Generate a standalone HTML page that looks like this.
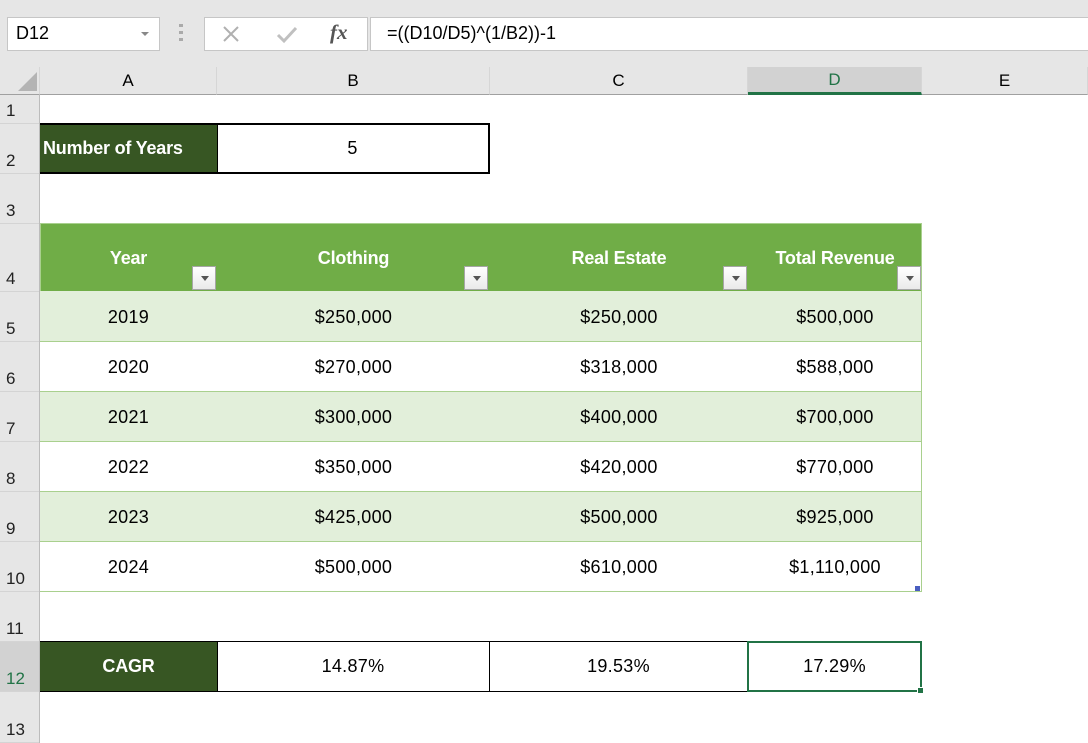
<!DOCTYPE html>
<html><head><meta charset="utf-8"><style>
*{margin:0;padding:0;box-sizing:border-box}
body{width:1088px;height:743px;background:#fff;position:relative;overflow:hidden;font-family:"Liberation Sans",sans-serif;color:#000}
.a{position:absolute}
.c{position:absolute;display:flex;align-items:center;justify-content:center;font-size:18px;letter-spacing:0.3px}
.h{color:#fff;font-weight:bold;font-size:18px;letter-spacing:-0.2px}
.rn{position:absolute;left:0;width:40px;font-size:17px;color:#222;padding-left:6px;background:#e6e6e6;border-bottom:1px solid #d4d4d4;display:flex;align-items:flex-end;padding-bottom:2px}
.ch{position:absolute;top:67px;height:28px;font-size:17px;display:flex;align-items:center;justify-content:center;border-right:1px solid #d6d6d6;border-bottom:1px solid #a0a0a0;background:#e6e6e6}
.dd{position:absolute;width:24px;height:24px;background:linear-gradient(#fff,#eaeaea);border:1px solid #a6a6a6}
.dd:after{content:"";position:absolute;left:8px;top:9px;border-left:4px solid transparent;border-right:4px solid transparent;border-top:5px solid #555}
</style></head><body>
<div class="a" style="left:0;top:0;width:1088px;height:67px;background:#e6e6e6"></div>
<div class="a" style="left:7px;top:17px;width:153px;height:34px;background:#fff;border:1px solid #c6c6c6;font-size:18px;padding:5px 0 0 8px">D12</div>
<div class="a" style="left:141px;top:32px;border-left:4px solid transparent;border-right:4px solid transparent;border-top:4px solid #888"></div>
<div class="a" style="left:179px;top:24px;width:4px;height:20px;background:repeating-linear-gradient(#aaa 0 3px,transparent 3px 7px)"></div>
<div class="a" style="left:204px;top:17px;width:164px;height:34px;background:#fff;border:1px solid #c6c6c6"></div>
<svg class="a" style="left:221px;top:24px" width="20" height="20"><path d="M3 3L17 17M17 3L3 17" stroke="#b0b0b0" stroke-width="2"/></svg>
<svg class="a" style="left:276px;top:25px" width="22" height="20"><path d="M2 10L8 16L20 3" stroke="#c0c0c0" stroke-width="3" fill="none"/></svg>
<div class="a" style="left:330px;top:20px;font-family:'Liberation Serif',serif;font-style:italic;font-weight:bold;font-size:21px;color:#555">fx</div>
<div class="a" style="left:370px;top:17px;width:720px;height:34px;background:#fff;border:1px solid #c6c6c6;font-size:18px;padding:5px 0 0 16px">=((D10/D5)^(1/B2))-1</div>
<div class="ch" style="left:0;width:40px"></div>
<svg class="a" style="left:18px;top:72px" width="19" height="19"><path d="M19 0L19 19L0 19Z" fill="#b4b4b4"/></svg>
<div class="ch" style="left:40px;width:177px">A</div>
<div class="ch" style="left:217px;width:273px">B</div>
<div class="ch" style="left:490px;width:258px">C</div>
<div class="ch" style="left:748px;width:174px;background:#d2d2d2;color:#217346;border-bottom:3px solid #217346">D</div>
<div class="ch" style="left:922px;width:166px">E</div>
<div class="a" style="left:39px;top:95px;width:1px;height:648px;background:#bcbcbc;z-index:2"></div>
<div class="rn" style="top:95px;height:29px">1</div>
<div class="rn" style="top:124px;height:50px">2</div>
<div class="rn" style="top:174px;height:50px">3</div>
<div class="rn" style="top:224px;height:68px">4</div>
<div class="rn" style="top:292px;height:50px">5</div>
<div class="rn" style="top:342px;height:50px">6</div>
<div class="rn" style="top:392px;height:50px">7</div>
<div class="rn" style="top:442px;height:50px">8</div>
<div class="rn" style="top:492px;height:50px">9</div>
<div class="rn" style="top:542px;height:50px">10</div>
<div class="rn" style="top:592px;height:50px">11</div>
<div class="rn" style="top:642px;height:50px;background:#d2d2d2;color:#217346">12</div>
<div class="rn" style="top:692px;height:51px">13</div>
<div class="c h" style="left:40px;top:123px;width:178px;height:51px;background:#375623;border:2px solid #000;border-right:1px solid #000;border-left:none;justify-content:flex-start;padding-left:3px;font-size:18px">Number of Years</div>
<div class="c" style="left:217px;top:123px;width:273px;height:51px;border:2px solid #000;border-left:none">5</div>
<div class="a" style="left:40px;top:223px;width:882px;height:69px;background:#70ad47;border:1px solid #a9d08e"></div>
<div class="c h" style="left:40px;top:238px;width:177px;height:40px">Year</div>
<div class="c h" style="left:217px;top:238px;width:273px;height:40px">Clothing</div>
<div class="c h" style="left:490px;top:238px;width:258px;height:40px">Real Estate</div>
<div class="c h" style="left:748px;top:238px;width:174px;height:40px">Total Revenue</div>
<div class="dd" style="left:192px;top:266px"></div>
<div class="dd" style="left:464px;top:266px"></div>
<div class="dd" style="left:723px;top:266px"></div>
<div class="dd" style="left:897px;top:266px"></div>
<div class="a" style="left:40px;top:291px;width:882px;height:301px;border-right:1px solid #a9d08e;background:
linear-gradient(#e2efda 0 50px,#a9d08e 50px 51px,#fff 51px 100px,#a9d08e 100px 101px,#e2efda 101px 150px,#a9d08e 150px 151px,#fff 151px 200px,#a9d08e 200px 201px,#e2efda 201px 250px,#a9d08e 250px 251px,#fff 251px 300px,#a9d08e 300px 301px)"></div>
<div class="a" style="left:915px;top:586px;width:5px;height:5px;background:#4a5ec0"></div>

<div class="c" style="left:40px;top:292px;width:177px;height:50px">2019</div>
<div class="c" style="left:217px;top:292px;width:273px;height:50px">$250,000</div>
<div class="c" style="left:490px;top:292px;width:258px;height:50px">$250,000</div>
<div class="c" style="left:748px;top:292px;width:174px;height:50px">$500,000</div>
<div class="c" style="left:40px;top:342px;width:177px;height:50px">2020</div>
<div class="c" style="left:217px;top:342px;width:273px;height:50px">$270,000</div>
<div class="c" style="left:490px;top:342px;width:258px;height:50px">$318,000</div>
<div class="c" style="left:748px;top:342px;width:174px;height:50px">$588,000</div>
<div class="c" style="left:40px;top:392px;width:177px;height:50px">2021</div>
<div class="c" style="left:217px;top:392px;width:273px;height:50px">$300,000</div>
<div class="c" style="left:490px;top:392px;width:258px;height:50px">$400,000</div>
<div class="c" style="left:748px;top:392px;width:174px;height:50px">$700,000</div>
<div class="c" style="left:40px;top:442px;width:177px;height:50px">2022</div>
<div class="c" style="left:217px;top:442px;width:273px;height:50px">$350,000</div>
<div class="c" style="left:490px;top:442px;width:258px;height:50px">$420,000</div>
<div class="c" style="left:748px;top:442px;width:174px;height:50px">$770,000</div>
<div class="c" style="left:40px;top:492px;width:177px;height:50px">2023</div>
<div class="c" style="left:217px;top:492px;width:273px;height:50px">$425,000</div>
<div class="c" style="left:490px;top:492px;width:258px;height:50px">$500,000</div>
<div class="c" style="left:748px;top:492px;width:174px;height:50px">$925,000</div>
<div class="c" style="left:40px;top:542px;width:177px;height:50px">2024</div>
<div class="c" style="left:217px;top:542px;width:273px;height:50px">$500,000</div>
<div class="c" style="left:490px;top:542px;width:258px;height:50px">$610,000</div>
<div class="c" style="left:748px;top:542px;width:174px;height:50px">$1,110,000</div>
<div class="c h" style="left:40px;top:641px;width:178px;height:51px;background:#375623;border-top:1px solid #000;border-bottom:1px solid #000;border-right:1px solid #000">CAGR</div>
<div class="c" style="left:217px;top:641px;width:273px;height:51px;border:1px solid #000;border-left:none">14.87%</div>
<div class="c" style="left:489px;top:641px;width:259px;height:51px;border:1px solid #000">19.53%</div>
<div class="c" style="left:747px;top:641px;width:175px;height:51px;border:2px solid #217346">17.29%</div>
<div class="a" style="left:917px;top:687px;width:7px;height:7px;background:#217346;border:1px solid #fff"></div>
</body></html>
